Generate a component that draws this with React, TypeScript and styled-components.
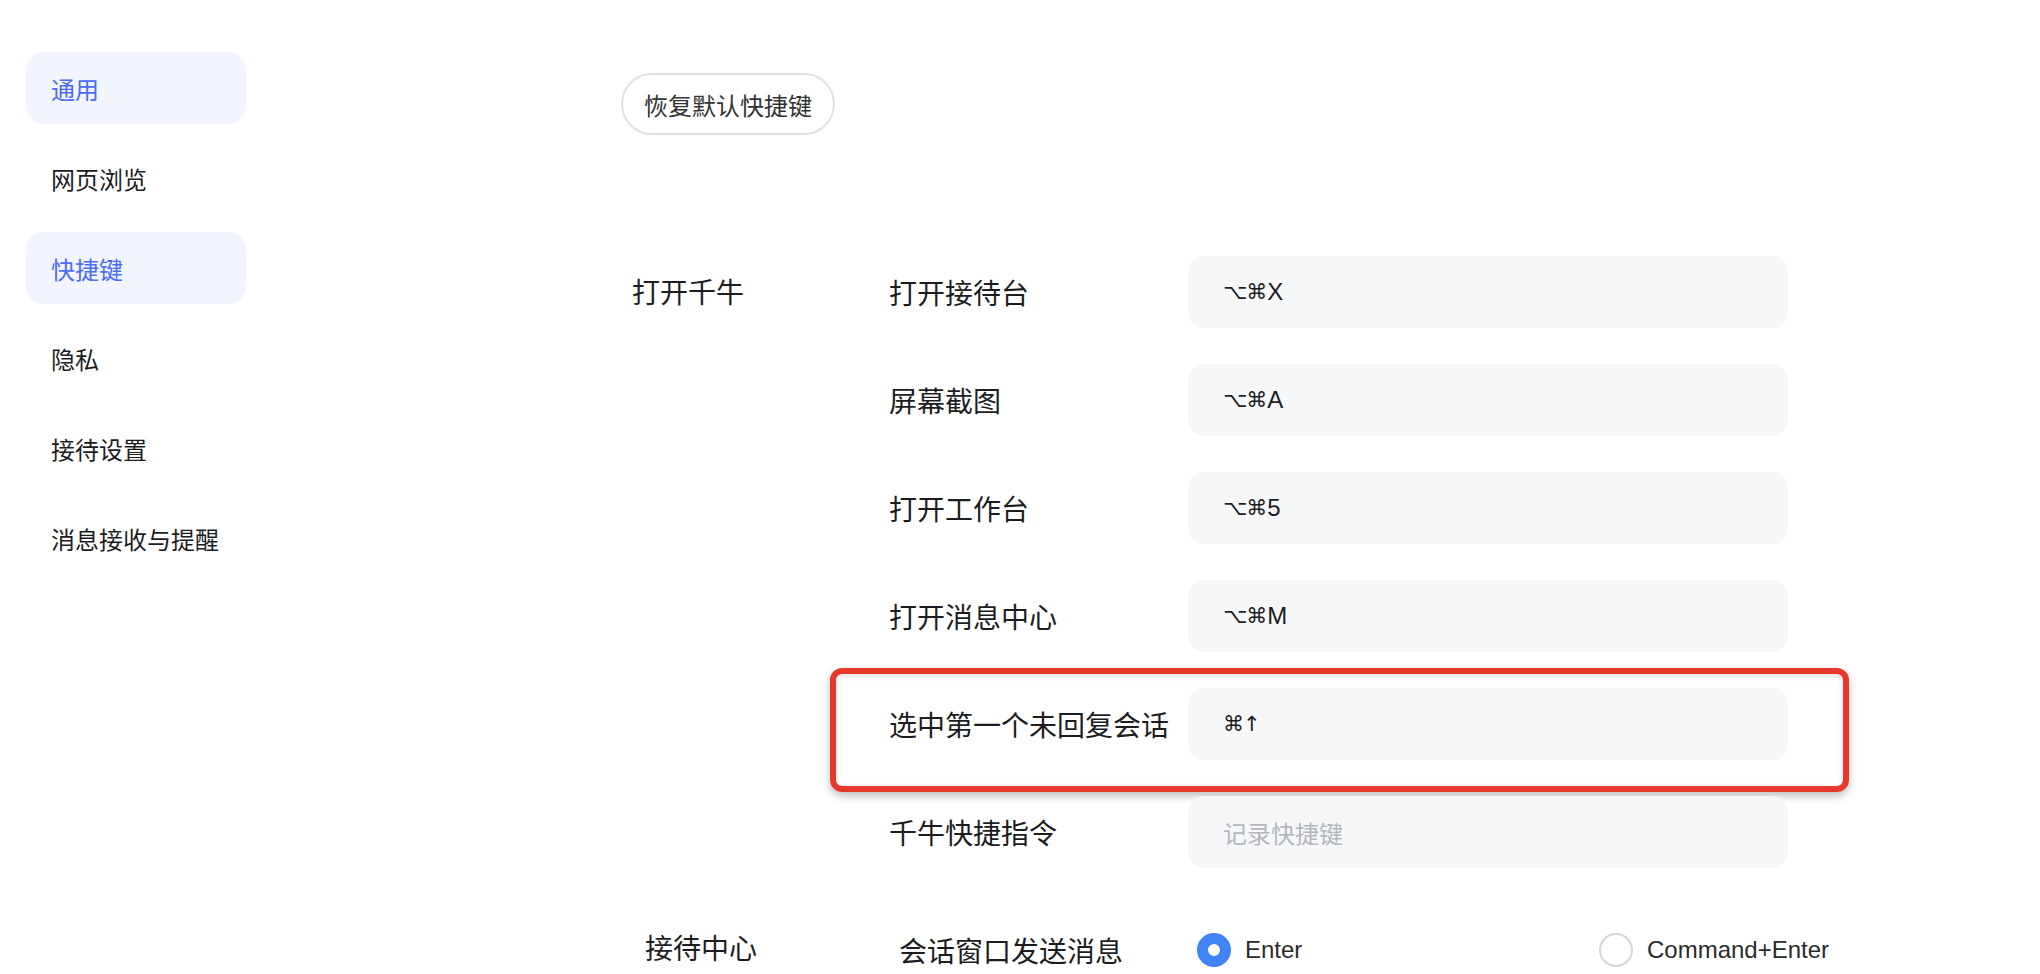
import React from "react";
import styled, {createGlobalStyle} from "styled-components";

const MENU = ["通用", "网页浏览", "快捷键", "隐私", "接待设置", "消息接收与提醒"];
const ACTIVE = ["通用", "快捷键"];

interface Hotkey {
    label: string;
    mods: string;
    key: string;
    marked?: boolean;
}

const HOTKEYS: Hotkey[] = [
    {label: "打开接待台", mods: "⌥⌘", key: "X"},
    {label: "屏幕截图", mods: "⌥⌘", key: "A"},
    {label: "打开工作台", mods: "⌥⌘", key: "5"},
    {label: "打开消息中心", mods: "⌥⌘", key: "M"},
    {label: "选中第一个未回复会话", mods: "⌘↑", key: "", marked: true},
    {label: "千牛快捷指令", mods: "", key: ""},
];

export default function App() {
    return (
        <>
            <GlobalStyle />
            <Page>
                <Sidebar>
                    {MENU.map(name => (
                        <MenuItem key={name} $active={ACTIVE.includes(name)}>
                            {name}
                        </MenuItem>
                    ))}
                </Sidebar>
                <Main>
                    <ResetButton>恢复默认快捷键</ResetButton>
                    <Section>
                        <GroupLabel>打开千牛</GroupLabel>
                        <RowList>
                            {HOTKEYS.map(hk => {
                                const empty = !hk.mods && !hk.key;
                                return (
                                    <Row key={hk.label}>
                                        <RowLabel>{hk.label}</RowLabel>
                                        <KeyField $empty={empty}>
                                            {empty ? (
                                                "记录快捷键"
                                            ) : (
                                                <>
                                                    <KeySym>{hk.mods}</KeySym>
                                                    {hk.key}
                                                </>
                                            )}
                                        </KeyField>
                                        {hk.marked && <Highlight />}
                                    </Row>
                                );
                            })}
                        </RowList>
                    </Section>
                    <Section $bottom>
                        <GroupLabel $indent={24}>接待中心</GroupLabel>
                        <Row>
                            <RowLabel $indent={10}>会话窗口发送消息</RowLabel>
                            <RadioGroup>
                                <RadioOption>
                                    <RadioDot $checked />
                                    Enter
                                </RadioOption>
                                <RadioOption>
                                    <RadioDot />
                                    Command+Enter
                                </RadioOption>
                            </RadioGroup>
                        </Row>
                    </Section>
                </Main>
            </Page>
        </>
    );
}

// ---------------------------------------------------------------------------
// Styles
// ---------------------------------------------------------------------------

const GlobalStyle = createGlobalStyle`
    html, body {
        margin: 0;
        padding: 0;
        background: #fff;
    }
    body {
        font-family: "Liberation Sans", "Noto Sans CJK SC", "DejaVu Sans", sans-serif;
        color: #1d1d1f;
        overflow: hidden;
    }
`;

const Page = styled.div`
    display: flex;
    height: 100vh;
`;

const Sidebar = styled.nav`
    width: 246px;
    flex-shrink: 0;
    box-sizing: border-box;
    padding: 52px 0 0 26px;
    display: flex;
    flex-direction: column;
    gap: 18px;
`;

const MenuItem = styled.div<{$active?: boolean}>`
    width: 220px;
    height: 72px;
    box-sizing: border-box;
    padding-left: 25px;
    display: flex;
    align-items: center;
    border-radius: 18px;
    font-size: 24px;
    background: ${p => (p.$active ? "#f2f4fe" : "transparent")};
    color: ${p => (p.$active ? "#4a6cf6" : "#1d1d1f")};
`;

const Main = styled.main`
    flex: 1;
    padding: 73px 0 0 375px;
    display: flex;
    flex-direction: column;
    align-items: flex-start;
`;

const ResetButton = styled.button`
    display: flex;
    align-items: center;
    box-sizing: border-box;
    height: 62px;
    min-height: 62px;
    flex-shrink: 0;
    padding: 0 21px;
    border: 2px solid #e0e0e0;
    border-radius: 31px;
    background: #fff;
    font-family: inherit;
    font-size: 24px;
    color: #333;
    cursor: pointer;
`;

const Section = styled.section<{$bottom?: boolean}>`
    display: flex;
    flex-shrink: 0;
    align-items: ${p => (p.$bottom ? "center" : "flex-start")};
    margin-top: ${p => (p.$bottom ? "44px" : "121px")};
`;

const GroupLabel = styled.div<{$indent?: number}>`
    width: 268px;
    box-sizing: border-box;
    padding-left: ${p => p.$indent ?? 11}px;
    font-size: 28px;
    line-height: 76px;
`;

const RowList = styled.div`
    display: flex;
    flex-direction: column;
    gap: 36px;
`;

const Row = styled.div`
    position: relative;
    display: flex;
    align-items: center;
    height: 72px;
    flex-shrink: 0;
`;

const RowLabel = styled.div<{$indent?: number}>`
    width: 299px;
    box-sizing: border-box;
    padding-left: ${p => p.$indent ?? 0}px;
    font-size: 28px;
    white-space: nowrap;
`;

const KeyField = styled.div<{$empty?: boolean}>`
    width: 600px;
    height: 72px;
    box-sizing: border-box;
    padding-left: 35px;
    display: flex;
    align-items: center;
    border-radius: 16px;
    background: #f6f7f9;
    font-size: 24px;
    color: ${p => (p.$empty ? "#b4b7bd" : "#1d1d1f")};
`;

const KeySym = styled.span`
    font-family: "DejaVu Sans", sans-serif;
    font-size: 21px;
    letter-spacing: -1px;
    margin-right: 1px;
`;

const Highlight = styled.div`
    position: absolute;
    left: -59px;
    top: -20px;
    right: -61px;
    bottom: -32px;
    border: 6px solid #e8382c;
    border-radius: 12px;
    box-shadow: 0 4px 9px rgba(0, 0, 0, 0.25), inset 0 2px 6px rgba(0, 0, 0, 0.12);
    pointer-events: none;
`;

const RadioGroup = styled.div`
    display: flex;
    align-items: center;
    padding-left: 9px;
`;

const RadioOption = styled.label`
    min-width: 402px;
    display: flex;
    align-items: center;
    gap: 14px;
    font-size: 24px;
    color: #2b2b2b;
`;

const RadioDot = styled.span<{$checked?: boolean}>`
    width: 34px;
    height: 34px;
    box-sizing: border-box;
    border-radius: 50%;
    flex-shrink: 0;
    border: ${p => (p.$checked ? "11px solid #4184f6" : "2px solid #d4d6db")};
    background: #fff;
`;
